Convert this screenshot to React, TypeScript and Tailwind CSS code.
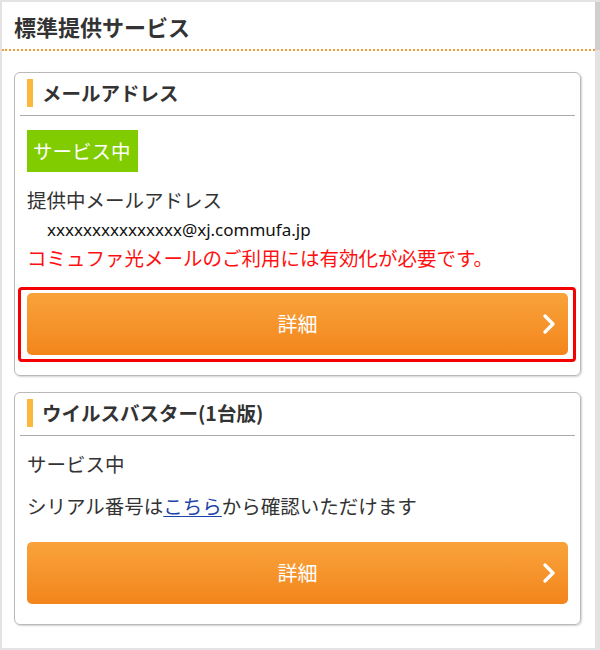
import React from 'react';

const Chevron = () => (
    <svg width="14" height="22" viewBox="0 0 14 22" className="absolute right-[12px] top-1/2 -translate-y-1/2">
        <polyline points="3,3 11,11 3,19" fill="none" stroke="#ffffff" strokeWidth="3.4" strokeLinecap="round" strokeLinejoin="round" />
    </svg>
);

const DetailButton = ({ marked }: { marked?: boolean }) => (
    <div className="relative">
        {marked && (
            <div className="absolute -left-[9px] -right-[8px] -top-[6px] -bottom-[7px] rounded-[4px] border-[3px] border-[#f50000] pointer-events-none" />
        )}
        <button className="relative w-full h-[62px] rounded-[5px] bg-gradient-to-b from-[#f8a33a] to-[#f3851a] text-white text-[20px] flex items-center justify-center">
            詳細
            <Chevron />
        </button>
    </div>
);

const CardHeader = ({ title }: { title: string }) => (
    <div className="mx-[5px] pt-[6px] pb-[8px] border-b border-[#a9a9a9] flex items-center">
        <div className="w-[6px] h-[28px] ml-[7px] bg-[#fbb83a]" />
        <h3 className="ml-[9px] text-[19.5px] font-bold text-[#333333] leading-[28px]">{title}</h3>
    </div>
);

const App = () => {
    return (
        <div className="relative h-[650px] w-[600px] bg-white border-t-2 border-l-2 border-b-2 border-r-[5px] border-[#e3e3e3] font-['Noto_Sans_CJK_JP','Noto_Sans',sans-serif] text-[#333333]">
            <div className="absolute -right-[5px] top-0 w-[5px] h-[48px] bg-[#cfcfcf]" />

            <div className="h-[49px] pl-3 pt-[2px] flex items-center border-b-2 border-dotted border-[#f39a3c]">
                <h2 className="text-[22px] font-bold text-[#333333]">標準提供サービス</h2>
            </div>

            <div className="ml-3 mr-[14px] mt-[21px] rounded-md border border-[#b9b9b9] shadow-[1px_1px_2px_rgba(0,0,0,0.18)]">
                <CardHeader title="メールアドレス" />
                <div className="px-3 pt-[14px] pb-[20px]">
                    <div className="inline-flex items-center h-[42px] w-[111px] px-[6px] bg-[#80cc00] text-white text-[19.5px]">
                        サービス中
                    </div>
                    <p className="mt-[13px] text-[19.5px] leading-[30px]">提供中メールアドレス</p>
                    <p className="pl-[20px] text-[17px] leading-[30px] text-[#111111] font-['Noto_Sans',sans-serif]">
                        xxxxxxxxxxxxxxx@xj.commufa.jp
                    </p>
                    <p className="text-[19.5px] leading-[25px] text-[#ff1010]">
                        コミュファ光メールのご利用には有効化が必要です。
                    </p>
                    <div className="mt-[23px]">
                        <DetailButton marked />
                    </div>
                </div>
            </div>

            <div className="ml-3 mr-[14px] mt-4 rounded-md border border-[#b9b9b9] shadow-[1px_1px_2px_rgba(0,0,0,0.18)]">
                <CardHeader title="ウイルスバスター(1台版)" />
                <div className="px-3 pt-[13px] pb-[20px]">
                    <p className="text-[19.5px] leading-[30px]">サービス中</p>
                    <p className="mt-[12px] text-[19.5px] leading-[30px]">
                        シリアル番号は<a href="#" className="text-[#1d43a6] underline underline-offset-2">こちら</a>から確認いただけます
                    </p>
                    <div className="mt-[21px]">
                        <DetailButton />
                    </div>
                </div>
            </div>
        </div>
    );
};

export default App;
